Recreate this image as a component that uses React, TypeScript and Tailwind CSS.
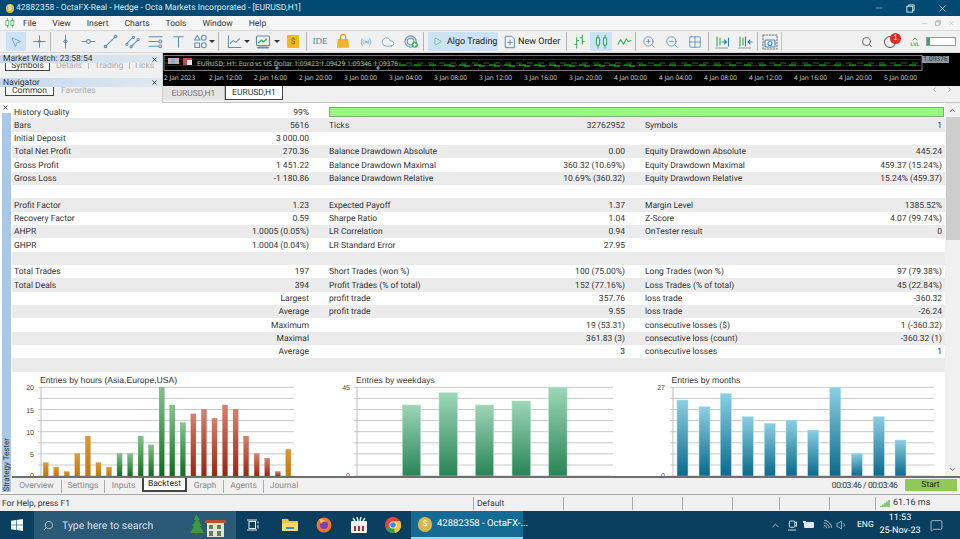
import { ChevronDown, ChevronLeft, ChevronRight, ChevronUp, Cloud, Grid2x2, Minus, MessageSquare, MousePointer2, Play, Radio, Search, Volume1, Wifi, X, ZoomIn, ZoomOut } from "lucide-react";

const UI = "font-['Roboto',sans-serif]";
const BLUE = "#5b8fb8";
const GREEN = "#2fae4e";

// [label, value, label, value, label, value]
const rows: string[][] = [
  ["History Quality", "99%"],
  ["Bars", "5616", "Ticks", "32762952", "Symbols", "1"],
  ["Initial Deposit", "3 000.00"],
  ["Total Net Profit", "270.36", "Balance Drawdown Absolute", "0.00", "Equity Drawdown Absolute", "445.24"],
  ["Gross Profit", "1 451.22", "Balance Drawdown Maximal", "360.32 (10.69%)", "Equity Drawdown Maximal", "459.37 (15.24%)"],
  ["Gross Loss", "-1 180.86", "Balance Drawdown Relative", "10.69% (360.32)", "Equity Drawdown Relative", "15.24% (459.37)"],
  [],
  ["Profit Factor", "1.23", "Expected Payoff", "1.37", "Margin Level", "1385.52%"],
  ["Recovery Factor", "0.59", "Sharpe Ratio", "1.04", "Z-Score", "4.07 (99.74%)"],
  ["AHPR", "1.0005 (0.05%)", "LR Correlation", "0.94", "OnTester result", "0"],
  ["GHPR", "1.0004 (0.04%)", "LR Standard Error", "27.95", "", ""],
  [],
  ["Total Trades", "197", "Short Trades (won %)", "100 (75.00%)", "Long Trades (won %)", "97 (79.38%)"],
  ["Total Deals", "394", "Profit Trades (% of total)", "152 (77.16%)", "Loss Trades (% of total)", "45 (22.84%)"],
  ["", "Largest", "profit trade", "357.76", "loss trade", "-360.32"],
  ["", "Average", "profit trade", "9.55", "loss trade", "-26.24"],
  ["", "Maximum", "", "19 (53.31)", "consecutive losses ($)", "1 (-360.32)"],
  ["", "Maximal", "", "361.83 (3)", "consecutive loss (count)", "-360.32 (1)"],
  ["", "Average", "", "3", "consecutive losses", "1"],
  [],
];

const dates = ["2 Jan 2023", "2 Jan 12:00", "2 Jan 16:00", "2 Jan 20:00", "3 Jan 00:00", "3 Jan 04:00", "3 Jan 08:00", "3 Jan 12:00", "3 Jan 16:00", "3 Jan 20:00", "4 Jan 00:00", "4 Jan 04:00", "4 Jan 08:00", "4 Jan 12:00", "4 Jan 16:00", "4 Jan 20:00", "5 Jan 00:00"];

const gridY = [387.3, 398.4, 409.5, 420.6, 431.7, 442.8, 453.9, 465, 476];

const hours = [3, 2, 1, 5, 9, 3, 2, 5, 5, 9, 7, 20, 16, 12, 14, 15, 13, 16, 15, 9, 5, 4, 1, 6];
const weekdays: [number, number, number][] = [[402.3, 18.4, 405], [439, 18.4, 392.7], [475.3, 18.4, 405], [512, 18.7, 401], [548.7, 18.4, 387.3]];
const months: [number, number][] = [[677, 90], [699, 110], [720.3, 70], [742.3, 140], [764.3, 160], [786, 150], [807.7, 180], [829.7, 52], [851.3, 250], [873.3, 140], [895, 210]];

function hourFill(i: number) {
  if (i >= 14 && i <= 22) return "url(#g-red)";
  if (i >= 7 && i <= 13) return "url(#g-green)";
  return "url(#g-orange)";
}

function Grid({ x1, x2 }: { x1: number; x2: number }) {
  return (
    <>
      {gridY.map((y) => (
        <line key={y} x1={x1 - 3} x2={x2} y1={y} y2={y} stroke="#c9c9c9" strokeWidth="1" />
      ))}
      <line x1={x1} x2={x1} y1={387} y2={476} stroke="#bdbdbd" strokeWidth="1" />
    </>
  );
}

function HoursChart() {
  return (
    <svg viewBox="12 372 316 105" className="h-[105px] w-[316px] shrink-0">
      <defs>
        <linearGradient id="g-orange" x1="0" y1="0" x2="0" y2="1"><stop offset="0" stopColor="#dc9a35" /><stop offset="1" stopColor="#c0760c" /></linearGradient>
        <linearGradient id="g-green" x1="0" y1="0" x2="0" y2="1"><stop offset="0" stopColor="#86c48f" /><stop offset="1" stopColor="#0b6e1c" /></linearGradient>
        <linearGradient id="g-red" x1="0" y1="0" x2="0" y2="1"><stop offset="0" stopColor="#d9806c" /><stop offset="1" stopColor="#98250f" /></linearGradient>
      </defs>
      <text x="40" y="383" fontSize="8.6" fill="#333" fontFamily="Liberation Sans, sans-serif">Entries by hours (Asia,Europe,USA)</text>
      {[["20", 390], ["15", 412.5], ["10", 434.5], ["5", 457], ["0", 478]].map(([t, y]) => (
        <text key={t} x="34" y={y} textAnchor="end" fontSize="7" fill="#444" fontFamily="Liberation Sans, sans-serif">{t}</text>
      ))}
      <Grid x1={41} x2={294} />
      {hours.map((v, i) => {
        const h = (v / 20) * 88.7;
        const color = i >= 14 && i <= 22 ? "#c05a45" : i >= 7 && i <= 13 ? "#3d9a4b" : "#d08a20";
        return <rect key={i} x={43.2 + i * 10.55} y={476 - h} width="5" height={h} fill={hourFill(i)} stroke={color} strokeWidth="0.3" />;
      })}
    </svg>
  );
}

function WeekdaysChart() {
  return (
    <svg viewBox="328 372 316 105" className="h-[105px] w-[316px] shrink-0">
      <defs>
        <linearGradient id="g-week" x1="0" y1="0" x2="0" y2="1"><stop offset="0" stopColor="#9ed6b8" /><stop offset="1" stopColor="#278455" /></linearGradient>
      </defs>
      <text x="356" y="383" fontSize="8.6" fill="#4a3a3a" fontFamily="Liberation Sans, sans-serif">Entries by weekdays</text>
      <text x="350" y="390" textAnchor="end" fontSize="7" fill="#444" fontFamily="Liberation Sans, sans-serif">45</text>
      <text x="350" y="478" textAnchor="end" fontSize="7" fill="#444" fontFamily="Liberation Sans, sans-serif">0</text>
      <Grid x1={357} x2={613} />
      {weekdays.map(([x, w, y]) => (
        <rect key={x} x={x} y={y} width={w} height={476 - y} fill="url(#g-week)" stroke="#b5e6cb" strokeWidth="0.6" />
      ))}
    </svg>
  );
}

function MonthsChart() {
  return (
    <svg viewBox="644 372 301 105" className="h-[105px] w-[301px] shrink-0">
      <defs>
        <linearGradient id="g-month" x1="0" y1="0" x2="0" y2="1"><stop offset="0" stopColor="#8ccfe2" /><stop offset="1" stopColor="#09698c" /></linearGradient>
      </defs>
      <text x="671.5" y="383" fontSize="8.6" fill="#333" fontFamily="Liberation Sans, sans-serif">Entries by months</text>
      <text x="665" y="390" textAnchor="end" fontSize="7" fill="#444" fontFamily="Liberation Sans, sans-serif">27</text>
      <text x="665" y="478" textAnchor="end" fontSize="7" fill="#444" fontFamily="Liberation Sans, sans-serif">0</text>
      <Grid x1={673} x2={934} />
      {months.map(([x, top]) => {
        const y = 370 + top / 3;
        return <rect key={x} x={x} y={y} width="11" height={476 - y} fill="url(#g-month)" stroke="#a9e4f2" strokeWidth="0.5" />;
      })}
    </svg>
  );
}

function Sep({ className = "" }: { className?: string }) {
  return <div className={`h-[19px] w-px shrink-0 bg-[#b4b4b4] ${className}`} />;
}

function Caret() {
  return <div className="h-0 w-0 border-x-[3px] border-t-[3px] border-x-transparent border-t-[#333]" />;
}

function Tool({ children, w = "w-[22px]", active = false, className = "" }: { children?: React.ReactNode; w?: string; active?: boolean; className?: string }) {
  return <div className={`flex h-[19px] shrink-0 items-center justify-center ${w} ${active ? "bg-[#cde3f5]" : ""} ${className}`}>{children}</div>;
}

function Ico({ children, color = BLUE, w = 15 }: { children: React.ReactNode; color?: string; w?: number }) {
  return (
    <svg viewBox="0 0 16 16" width={w} height={w} fill="none" stroke={color} strokeWidth="1.1" strokeLinecap="round" strokeLinejoin="round">
      {children}
    </svg>
  );
}

function Toolbar() {
  return (
    <div className="flex h-[22px] items-center border-b border-[#d8d8d8] bg-[#f0f0f0] pl-[6px]">
      <Tool w="w-[20px]" active><MousePointer2 size={12} color="#4f86b5" strokeWidth={1.3} /></Tool>
      <Tool className="ml-[2px]"><Ico><path d="M2 8h12M8 2v12" /><circle cx="8" cy="8" r="1" /></Ico></Tool>
      <Sep />
      <Tool className="ml-[3px]"><Ico><path d="M8 1v14" /><path d="M8 6l2 2-2 2-2-2z" /></Ico></Tool>
      <Tool className="ml-px"><Ico><path d="M1 8h14" /><circle cx="8" cy="8" r="2" fill="#f0f0f0" /></Ico></Tool>
      <Tool><Ico><path d="M3.5 12.5l9-9" /><circle cx="2.7" cy="13.3" r="1.4" /><circle cx="13.3" cy="2.7" r="1.4" /></Ico></Tool>
      <Tool><Ico><path d="M2 10l6-6M7 13l6-6" /><circle cx="2" cy="11" r="1.2" /><circle cx="9" cy="3.5" r="1.2" /><circle cx="6.5" cy="13.5" r="1.2" /><circle cx="14" cy="6" r="1.2" /></Ico></Tool>
      <Tool className="ml-px"><Ico><path d="M1 3h14M1 8h10M1 13h10" /><circle cx="13" cy="8" r="1.5" /><circle cx="13" cy="13" r="1.5" /></Ico></Tool>
      <Tool className="ml-px"><Ico><path d="M3 3h10M8 3v11" /></Ico></Tool>
      <Tool w="w-[18px]" className="ml-[2px]"><Ico><path d="M4.5 1.5l3 5h-6z" /><circle cx="11.5" cy="4" r="2.6" /><rect x="2" y="9.5" width="5" height="5" /><circle cx="11.5" cy="12" r="2.6" /></Ico></Tool>
      <Tool w="w-[6px]"><Caret /></Tool>
      <Sep className="ml-[3px]" />
      <Tool w="w-[18px]" className="ml-[6px]"><Ico><path d="M1.5 2v12.5H15" /><path d="M3.5 10l3-3 3 2 4-4" /></Ico></Tool>
      <Tool w="w-[8px]"><Caret /></Tool>
      <Tool w="w-[18px]" className="ml-[3px]"><Ico w={16}><rect x="1.5" y="2" width="13" height="9.5" rx="1" /><path d="M3.5 9l3-3 2 2 3-3" stroke={GREEN} /><path d="M3 13.5h10" strokeWidth="2" /></Ico></Tool>
      <Tool w="w-[8px]" className="ml-px"><Caret /></Tool>
      <Tool className="ml-px"><div className={`flex h-[13px] w-[12px] items-center justify-center rounded-[1px] bg-[#f2b61e] text-[8px] leading-none text-[#8a5a00] ${UI}`}>$</div></Tool>
      <Sep className="ml-[2px]" />
      <Tool className={`ml-[2px] text-[9px] text-[#4f7ea5] font-['Liberation_Serif',serif]`} w="w-[22px]">IDE</Tool>
      <Tool className="ml-px"><svg viewBox="0 0 16 16" width="14" height="15"><path d="M2 5h12l1 10H1z" fill="#f0b429" /><path d="M5 7V3a3 3 0 016 0v4" fill="none" stroke="#d4950c" strokeWidth="1.2" /></svg></Tool>
      <Tool className="ml-px"><Radio size={12} color={BLUE} strokeWidth={1.3} /></Tool>
      <Tool><Cloud size={14} color={BLUE} strokeWidth={1.2} /></Tool>
      <Tool className="ml-px"><Ico><circle cx="7" cy="8" r="6" /><circle cx="7" cy="8" r="3.5" /><circle cx="11.5" cy="11.5" r="3.2" fill={GREEN} stroke="none" /><path d="M11.5 10v3M10 11.5h3" stroke="#fff" /></Ico></Tool>
      <Sep className="ml-px" />
      <Tool w="w-[70px]" active className={`ml-[4px] justify-start gap-[5px] whitespace-nowrap pl-[5px] text-[9px] text-[#222] ${UI}`}>
        <Play size={9} color={GREEN} strokeWidth={1.5} />
        <span className="mt-[2px]">Algo Trading</span>
      </Tool>
      <Tool w="w-[63px]" className={`ml-[5px] justify-start gap-[1px] whitespace-nowrap text-[9px] text-[#222] ${UI}`}>
        <Ico w={14}><path d="M3 1.5h7l3 3v10H3z" /><path d="M8 6v5M5.5 8.5h5" /></Ico>
        <span className="mt-[2px]">New Order</span>
      </Tool>
      <Sep />
      <Tool className="ml-px"><Ico color={GREEN}><path d="M5 4v11M3 11h2M5 7h2M11 1v10M9 4h2M11 8h2" /></Ico></Tool>
      <Tool active><Ico color={GREEN}><rect x="2.5" y="4" width="3.5" height="8" rx="1" /><rect x="10" y="4" width="3.5" height="8" rx="1" /><path d="M4.2 1v3M4.2 12v3M11.8 1v3M11.8 12v3" /></Ico></Tool>
      <Tool className="ml-px"><Ico color={GREEN}><path d="M1 11l3-5 3 5 3-6 2 3 3-1" /></Ico></Tool>
      <Sep />
      <Tool className="ml-[2px]"><ZoomIn size={14} color="#3e86bd" strokeWidth={1.3} /></Tool>
      <Tool className="ml-px"><ZoomOut size={14} color="#3e86bd" strokeWidth={1.3} /></Tool>
      <Tool className="ml-px"><Grid2x2 size={14} color="#3e86bd" strokeWidth={1.3} /></Tool>
      <Sep className="ml-[2px]" />
      <Tool className="ml-[2px]"><Ico color={GREEN} w={16}><path d="M3 3v9M6 4v7" /><path d="M1.5 14h12" stroke="#999" /><path d="M8 8h4M10.5 6l2 2-2 2" stroke="#2c7fb8" /><path d="M14.5 4v8" stroke="#2c7fb8" /></Ico></Tool>
      <Tool className="ml-px"><Ico color={GREEN} w={16}><path d="M3 3v9M6 4v7" /><path d="M1.5 14h12" stroke="#999" /><path d="M8.5 3v9" stroke="#2c7fb8" /><path d="M15 8h-4M13 6l-2 2 2 2" stroke="#2c7fb8" /></Ico></Tool>
      <Sep className="ml-[1px]" />
      <Tool w="w-[24px]" className="border-r border-[#c4c4c4]"><Ico color="#3e86bd" w={16}><path d="M1 1h14v14H1z" strokeDasharray="1.5 1.5" stroke="#777" /><rect x="3" y="6" width="10" height="7" rx="1" /><circle cx="8" cy="9.5" r="2" /></Ico></Tool>
      <div className="flex-1" />
      <Search size={12} color="#333" strokeWidth={1.4} />
      <div className="relative ml-[11px] h-[12px] w-[12px] rounded-full border border-[#555]">
        <div className="absolute -right-[6px] -top-[4px] flex h-[11px] w-[11px] items-center justify-center rounded-full bg-[#e02a1f] font-['Liberation_Sans',sans-serif] text-[8px] leading-none text-white">1</div>
      </div>
      <div className="relative ml-[14px] flex w-[10px] flex-col items-center text-[5px] font-bold leading-none text-[#2fae4e]">
        <ChevronUp size={8} strokeWidth={3} />
        <span className="font-['Liberation_Sans',sans-serif]">LVL</span>
      </div>
      <div className="ml-[6px] mr-[4px] flex h-[9px] w-[30px] border border-[#999] bg-white">
        <div className="w-[3px] bg-[#2fae4e]" />
      </div>
    </div>
  );
}

function PaneTitle({ title, h }: { title: string; h: string }) {
  return (
    <div className={`flex items-center justify-between bg-gradient-to-r from-[#c5d8ec] to-[#dfe8f1] pl-[3px] pr-[4px] text-[8.5px] text-[#333] ${h}`}>
      <span className="mt-px leading-none">{title}</span>
      <X size={7} color="#222" strokeWidth={3} />
    </div>
  );
}

function LeftPanes() {
  return (
    <div className={`flex h-[50px] w-[163px] shrink-0 flex-col border-r border-[#d0d0d0] bg-[#f0f0f0] pt-[2px] text-[8.5px] ${UI}`}>
      <PaneTitle title="Market Watch: 23:58:54" h="h-[8px]" />
      <div className="flex h-[8px] items-start overflow-hidden pl-[5px] leading-[7px] text-[#aaa]">
        <div className="h-[8px] w-[45px] border-x border-b border-[#444] bg-white text-center text-[#333]">Symbols</div>
        <div className="h-[6px] w-[39px] border-r border-[#bbb] text-center">Details</div>
        <div className="h-[6px] w-[41px] border-r border-[#bbb] text-center">Trading</div>
        <div className="w-[28px] text-center">Ticks</div>
      </div>
      <div className="h-[7px]" />
      <PaneTitle title="Navigator" h="h-[9px]" />
      <div className="flex h-[9px] items-start overflow-hidden pl-[5px] leading-[8px] text-[#aaa]">
        <div className="h-[9px] w-[49px] border-x border-b border-[#444] bg-white text-center text-[#333]">Common</div>
        <div className="ml-[7px]">Favorites</div>
      </div>
    </div>
  );
}

function ChartStrip() {
  return (
    <div className="relative h-[33px] border-y-2 border-black bg-black">
      <svg viewBox="164 55 796 16" className="block h-[16px] w-[796px]">
        <rect x="165" y="55.5" width="758" height="15" fill="none" stroke="#9a9a9a" strokeWidth="0.8" />
        <path d="M165 59.5H923M165 65.5H923" stroke="#3a3a3a" strokeWidth="0.7" />
        <path d="M165 63H923" stroke="#0c7d0c" strokeWidth="1" strokeDasharray="6 5" />
        <path d="M400 65H923" stroke="#12d012" strokeWidth="1.2" strokeDasharray="7 8" />
        <path d="M450 66H640" stroke="#12d012" strokeWidth="1" strokeDasharray="6 9" />
        {dates.map((_, i) => (
          <path key={i} d={`M${165 + i * 22.5 + 22} 55V71`} stroke="#555" strokeWidth="0.6" strokeDasharray="1.5 3" />
        ))}
        <rect x="169" y="58" width="11" height="6" fill="#d8a8a8" />
        <rect x="172" y="58" width="4" height="6" fill="#7fb0dc" />
        <rect x="184" y="58" width="9" height="7" fill="#cc4444" />
        <rect x="188" y="60" width="5" height="5" fill="#dfe8f2" />
        <path d="M276 68l2-2 2 2-2 2zM377 68l2-2 2 2-2 2z" fill="#5b93d6" />
        <text x="198" y="65.5" fontSize="6.7" fill="#b8b89c" fontFamily="Open Sans, sans-serif">EURUSD, H1:  Euro vs US Dollar  1.09423 1.09429 1.09346 1.09376</text>
      </svg>
      <div className="absolute left-[759px] top-px flex h-[7px] w-[27px] items-center justify-center bg-[#8d97a3] font-['Open_Sans',sans-serif] text-[6.5px] leading-none text-[#222]">1.09376</div>
      <div className="flex pl-px font-['Open_Sans',sans-serif] text-[6.5px] leading-[13px] text-[#d8d8d8]">
        {dates.map((d) => (
          <div key={d} className="w-[45px] shrink-0 whitespace-nowrap">{d}</div>
        ))}
      </div>
    </div>
  );
}

function DocTabs() {
  return (
    <div className={`flex h-[17px] items-start border-b border-[#c4c4c4] bg-[#f0f0f0] text-[8.5px] ${UI}`}>
      <div className="flex h-[14px] w-[62px] items-center justify-center border-r border-[#bbb] bg-[#e4e4e4] pt-[2px] text-[#777]">EURUSD,H1</div>
      <div className="flex h-[14px] w-[58px] items-center justify-center border-x border-b border-[#444] bg-white pt-[2px] text-[#333]">EURUSD,H1</div>
      <div className="flex-1" />
      <ChevronLeft size={7} color="#999" strokeWidth={3} />
      <ChevronRight size={7} color="#999" strokeWidth={3} className="ml-[8px] mr-[7px]" />
    </div>
  );
}

function Row({ row, i }: { row: string[]; i: number }) {
  const [a, b, c, d, e, f] = row;
  return (
    <div className={`grid h-[13.33px] grid-cols-[295px_296px_297px] gap-x-[20px] pl-[2px] pt-[1.5px] text-[8.5px] leading-[12px] text-[#333] ${i % 2 ? "bg-[#ebebeb]" : "bg-white"}`}>
      <div className="flex justify-between"><span>{a}</span><span>{b}</span></div>
      {i === 0 ? (
        <div className="col-span-2 h-[10px] w-[615px] border border-[#74b364] bg-[#98f77f]" />
      ) : (
        <>
          <div className="flex justify-between"><span>{c}</span><span>{d}</span></div>
          <div className="flex justify-between"><span>{e}</span><span>{f}</span></div>
        </>
      )}
    </div>
  );
}

function BottomTabs() {
  const cell = "flex h-[13px] items-center justify-center border-r border-[#aaa] text-[#888]";
  return (
    <div className={`flex h-[18px] items-start border-t-2 border-[#6f6f6f] bg-[#f0f0f0] text-[8.5px] ${UI}`}>
      <div className={`${cell} w-[50px] mt-[2px]`}>Overview</div>
      <div className={`${cell} w-[43px] mt-[2px]`}>Settings</div>
      <div className="mt-[2px] flex h-[13px] w-[37px] items-center justify-center text-[#888]">Inputs</div>
      <div className="flex h-[14px] w-[45px] items-center justify-center border-x-2 border-b-2 border-[#444] bg-white text-[#222]">Backtest</div>
      <div className={`${cell} w-[37px] mt-[2px]`}>Graph</div>
      <div className={`${cell} w-[40px] mt-[2px]`}>Agents</div>
      <div className="mt-[2px] flex h-[13px] w-[40px] items-center justify-center text-[#888]">Journal</div>
      <div className="flex-1" />
      <div className="mr-[7px] mt-[2px] h-[13px] leading-[13px] tracking-[-0.4px] text-[#333]">00:03:46 / 00:03:46</div>
      <div className="mr-[3.5px] mt-[1px] flex h-[12px] w-[52px] items-center justify-center bg-[#90c85a] text-[#222]">Start</div>
    </div>
  );
}

function StatusBar() {
  const cell = "h-[13px] shrink-0 border-l border-[#a8a8a8]";
  return (
    <div className={`flex h-[17px] items-center border-t border-[#a8a8a8] bg-[#f0f0f0] text-[8.5px] text-[#333] ${UI}`}>
      <div className="w-[473px] shrink-0 pl-[2px] pt-[2px]">For Help, press F1</div>
      <div className={`${cell} w-[90px] pl-[3px] pt-[1.5px] leading-[13px]`}>Default</div>
      <div className={`${cell} w-[69px]`} />
      <div className={`${cell} w-[50px]`} />
      <div className={`${cell} w-[50px]`} />
      <div className={`${cell} w-[47px]`} />
      <div className={`${cell} w-[50px]`} />
      <div className={`${cell} w-[46px]`} />
      <div className={`${cell} flex items-center gap-[3px] pl-[4px] text-[9px]`}>
        <svg viewBox="0 0 10 9" width="10" height="9"><path d="M1 8V7M3 8V5.5M5 8V4M7 8V2.5M9 8V1" stroke="#3cae3c" strokeWidth="1.2" /></svg>
        <span className="pt-[1.5px] leading-[13px]">61.16 ms</span>
      </div>
    </div>
  );
}

function Taskbar() {
  return (
    <div className={`flex h-[28px] items-center bg-[#0b3f60] text-white ${UI}`}>
      <svg viewBox="0 0 12 12" width="12" height="12" className="ml-[11px] shrink-0"><path d="M0 1.7L5 1v4.7H0zM5.6 .9L12 0v5.7H5.6zM0 6.3h5V11l-5-.7zM5.6 6.3H12V12l-6.4-.9z" fill="#f4f8fb" /></svg>
      <div className="ml-[11px] flex h-[28px] w-[202px] shrink-0 items-center bg-[#2b5a76] pl-[9px] text-[10.5px] text-[#d4dfe6]">
        <Search size={11} color="#dfe7ec" strokeWidth={1.4} className="-scale-x-100" />
        <span className="ml-[8px] w-[92px] whitespace-nowrap pt-px">Type here to search</span>
        <svg viewBox="0 0 38 24" width="38" height="24" className="ml-[35px] shrink-0">
          <path d="M7 1l4 6h-2l4 6h-2l4 7H1l4-7H3l4-6H5z" fill="#3d9a3d" />
          <rect x="6" y="20" width="3" height="3" fill="#7b4a1e" />
          <path d="M16 7h21v3H16z" fill="#b8502c" />
          <rect x="18" y="10" width="17" height="14" fill="#e8e0d0" />
          <path d="M20 12h4v4h-4zM28 12h4v4h-4zM20 18h4v5h-4zM28 18h4v5h-4z" fill="#5f7f5f" />
        </svg>
      </div>
      <svg viewBox="0 0 12 12" width="12" height="12" className="ml-[11px] shrink-0" fill="none" stroke="#e6edf2" strokeWidth="1"><rect x="2" y="2.5" width="6.5" height="7" /><path d="M0 1h10M0 11h10M11 2.5v2M11 6v3.5" /></svg>
      <svg viewBox="0 0 16 14" width="16" height="14" className="ml-[23px] shrink-0"><path d="M0 1h6l1 2h9v10H0z" fill="#f0c33c" /><path d="M0 5h16v8H0z" fill="#ffd968" /><rect x="4" y="9" width="8" height="2" fill="#3b8fd0" /></svg>
      <svg viewBox="0 0 16 16" width="16" height="16" className="ml-[18px] shrink-0"><circle cx="8" cy="8" r="7.5" fill="#f2762a" /><circle cx="8" cy="8" r="4" fill="#7a3fc0" /><path d="M3 2c3 0 6 1 8 3-3-1-5 0-6 2z" fill="#ffc23a" /></svg>
      <svg viewBox="0 0 16 16" width="16" height="16" className="ml-[19px] shrink-0"><rect y="4" width="16" height="12" rx="1" fill="#f2f2f2" /><path d="M2 1l2 3M6 0l1 4M10 0l-1 4M14 1l-2 3" stroke="#eee" strokeWidth="1.4" /><path d="M3 9h2v5H3zM7 9h2v5H7zM11 9h2v5h-2z" fill="#a33" /></svg>
      <svg viewBox="0 0 16 16" width="16" height="16" className="ml-[18px] shrink-0"><circle cx="8" cy="8" r="8" fill="#e9443a" /><path d="M8 8L1 12a8 8 0 0014 0z" fill="#2ca24c" /><path d="M8 4h7a8 8 0 01-5 12z" fill="#fbc02d" /><circle cx="8" cy="8" r="3.6" fill="#fff" /><circle cx="8" cy="8" r="2.8" fill="#3f83e6" /></svg>
      <div className="ml-[10px] flex h-[28px] w-[112px] shrink-0 items-center border-b-2 border-[#8fdcff] bg-[#166a96] pl-[7px] text-[9.5px]">
        <div className="flex h-[15px] w-[14px] shrink-0 items-center justify-center rounded-full bg-[#d9b54a] text-[8px] text-white">$</div>
        <span className="ml-[5px] whitespace-nowrap">42882358 - OctaFX-...</span>
      </div>
      <div className="flex-1" />
      <ChevronUp size={11} color="#e8eef2" strokeWidth={1.5} />
      <svg viewBox="0 0 10 14" width="9" height="13" className="ml-[7px]" fill="none" stroke="#e8eef2" strokeWidth="1"><rect x="1.5" y="2" width="6" height="7" rx="1" /><path d="M0 12h9M7.5 4l2-1v5l-2-1" /></svg>
      <svg viewBox="0 0 12 8" width="12" height="8" className="ml-[6px]"><rect x="1" y="1" width="10" height="6" rx="1" fill="#dfe8ee" /><path d="M0 0h3v2H0z" fill="#dfe8ee" /></svg>
      <Wifi size={12} color="#dbe5eb" strokeWidth={1.4} className="ml-[6px] rotate-45" />
      <Volume1 size={12} color="#e8eef2" strokeWidth={1.3} className="ml-[3px]" />
      <span className="ml-[9px] w-[15px] whitespace-nowrap text-[8.5px] leading-none">ENG</span>
      <div className="ml-[6px] flex w-[44px] flex-col items-center whitespace-nowrap text-[9px] leading-[13px]">
        <span>11:53</span>
        <span>25-Nov-23</span>
      </div>
      <MessageSquare size={13} color="#eef3f6" strokeWidth={1.2} className="ml-[8px] mr-[17px]" />
    </div>
  );
}

export default function App() {
  return (
    <div className="flex h-[539px] w-[960px] flex-col overflow-hidden bg-white [text-rendering:geometricPrecision]">
      {/* title bar */}
      <div className={`flex h-[16px] items-center bg-[#004a73] pl-[6px] text-[8.5px] text-[#dfe8ee] ${UI}`}>
        <div className="flex h-[9px] w-[8px] items-center justify-center rounded-full bg-[#d9b54a] text-[7px] leading-none text-white">$</div>
        <span className="ml-[2px] mt-px">42882358 - OctaFX-Real - Hedge - Octa Markets Incorporated - [EURUSD,H1]</span>
        <div className="flex-1" />
        <Minus size={10} color="#e6eef3" strokeWidth={1.2} />
        <svg viewBox="0 0 10 10" width="9" height="9" className="ml-[22px]" fill="none" stroke="#e6eef3" strokeWidth="1"><rect x="1" y="2.5" width="6.5" height="6.5" /><path d="M3 2.5V1h6v6H7.5" /></svg>
        <X size={11} color="#f2f6f8" strokeWidth={1.4} className="ml-[22px] mr-[12px]" />
      </div>

      {/* menu */}
      <div className={`flex h-[15px] items-center border-b border-[#d8d8d8] bg-[#f5f5f5] pl-[5px] text-[8.5px] text-[#333] ${UI}`}>
        <Ico color={GREEN} w={10}><rect x="2" y="4" width="4" height="8" /><rect x="10" y="4" width="4" height="8" /><path d="M4 1v3M4 12v3M12 1v3M12 12v3" /></Ico>
        <div className="ml-[8px] mt-[2px] flex gap-[16px]">
          {["File", "View", "Insert", "Charts", "Tools", "Window", "Help"].map((m) => (
            <span key={m}>{m}</span>
          ))}
        </div>
        <div className="flex-1" />
        <Minus size={7} color="#aaa" strokeWidth={1.5} />
        <svg viewBox="0 0 10 10" width="6" height="6" className="ml-[7px]" fill="none" stroke="#aaa" strokeWidth="1.3"><rect x="1" y="3" width="6" height="6" /><path d="M3 3V1h6v6H7" /></svg>
        <X size={7} color="#aaa" strokeWidth={1.5} className="ml-[7px] mr-[5px]" />
      </div>

      <Toolbar />

      {/* panes + chart */}
      <div className="flex h-[50px]">
        <LeftPanes />
        <div className="flex-1">
          <ChartStrip />
          <DocTabs />
        </div>
      </div>

      {/* strategy tester */}
      <div className="flex h-[391px]">
        <div className="relative w-[12px] shrink-0 bg-white">
          <X size={7} color="#222" strokeWidth={3} className="absolute left-[2px] top-[1px]" />
          <div className="absolute bottom-[2px] left-[2px] top-[10px] flex w-[9px] items-end bg-[#a9c7e6]">
            <span className={`rotate-180 text-[8px] leading-[9px] text-[#333] [writing-mode:vertical-rl] ${UI}`}>Strategy Tester</span>
          </div>
        </div>
        <div className="flex w-[948px] flex-col">
          <div className="flex h-[373px]">
            <div className={`w-[933px] overflow-hidden pt-[2px] ${UI}`}>
              {rows.map((r, i) => (
                <Row key={i} row={r} i={i} />
              ))}
              <div className="flex">
                <HoursChart />
                <WeekdaysChart />
                <MonthsChart />
              </div>
            </div>
            <div className="flex w-[15px] flex-col items-center bg-[#f0f0f0]">
              <ChevronUp size={9} color="#555" strokeWidth={2} className="mt-[3px]" />
              <div className="mt-[2px] h-[123px] w-[14px] bg-[#cdcdcd]" />
              <div className="flex-1" />
              <ChevronDown size={9} color="#555" strokeWidth={2} className="mb-[2px]" />
            </div>
          </div>
          <BottomTabs />
        </div>
      </div>

      <StatusBar />
      <Taskbar />
    </div>
  );
}
